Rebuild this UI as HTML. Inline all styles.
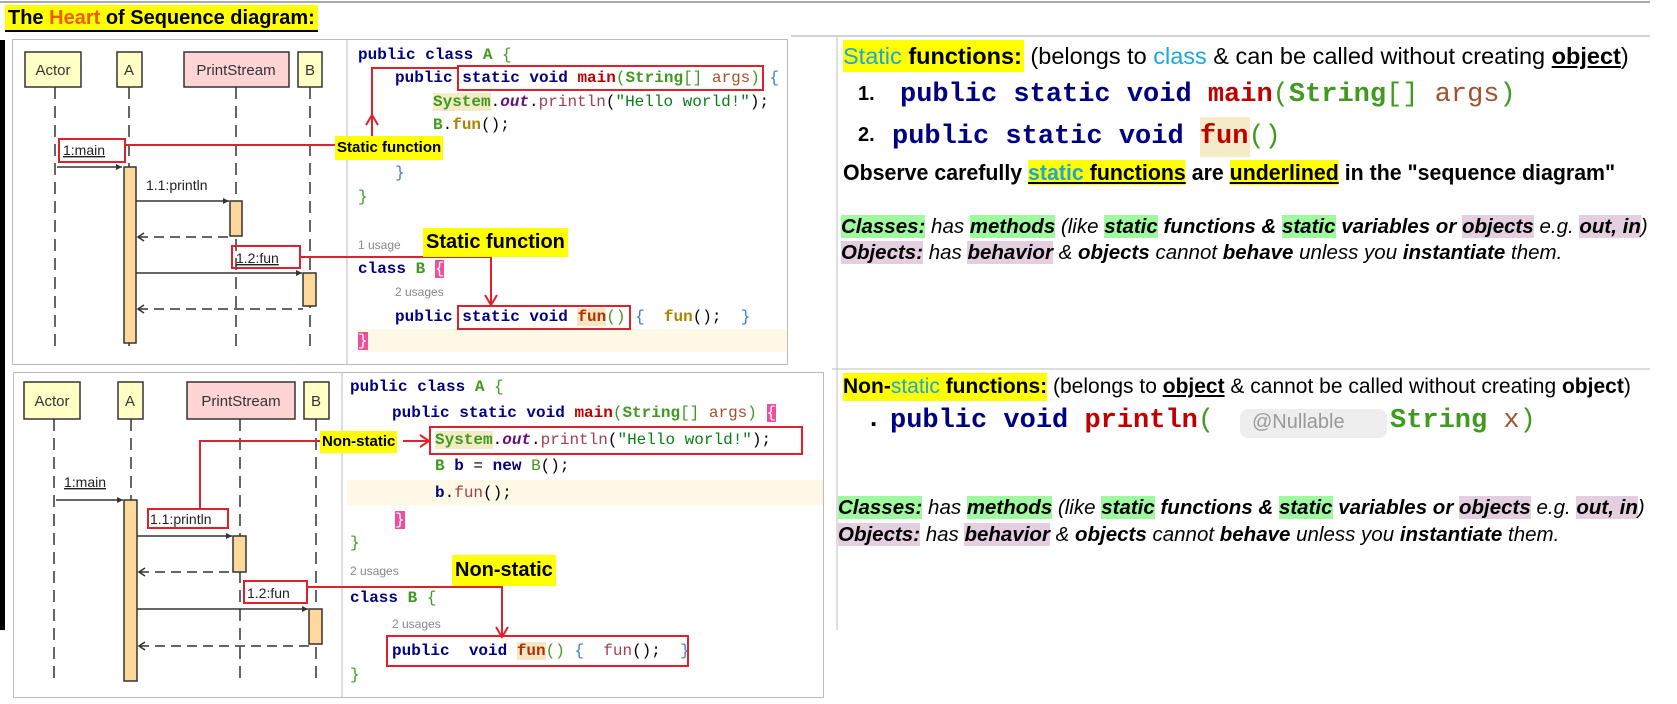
<!DOCTYPE html>
<html><head><meta charset="utf-8"><style>
*{margin:0;padding:0;box-sizing:border-box}
body{width:1677px;height:704px;background:#fff;position:relative;overflow:hidden;font-family:"Liberation Sans",sans-serif;color:#000}
.a{position:absolute;white-space:nowrap}
.c{font-family:"Liberation Mono",monospace;font-size:16px;line-height:20px;white-space:pre}
.k{color:#000080;font-weight:bold}
.g{color:#3f9a1f}
.gb{color:#3f9a1f;font-weight:bold}
.r{color:#c00000;font-weight:bold}
.br{color:#a0522d}
.s{color:#067d17}
.o{color:#660e7a;font-weight:bold;font-style:italic}
.y{background:#ffff00}
.gr{background:#9ffa9f}
.pk{background:#e3cfdf}
.u{font-size:12px;color:#888;font-family:"Liberation Sans",sans-serif}
.lab{background:#ffff00;font-weight:bold;font-family:"Liberation Sans",sans-serif}
.it{font-style:italic;font-size:20.5px}
.it b{font-weight:bold}
.nar{transform-origin:0 50%}
</style></head><body>
<svg class="a" style="left:0;top:0" width="1677" height="704">
<line x1="0" y1="2" x2="1650" y2="2" stroke="#aaa" stroke-width="2"/>
<line x1="791" y1="36" x2="1650" y2="36" stroke="#aaa"/>
<line x1="837" y1="36" x2="837" y2="630" stroke="#bbb"/>
<line x1="832" y1="369" x2="1650" y2="369" stroke="#bbb"/>
<rect x="0" y="40" width="5" height="590" fill="#000"/>
<rect x="12.5" y="39.5" width="775" height="325" fill="none" stroke="#bbb"/>
<line x1="347" y1="40" x2="347" y2="364" stroke="#bbb"/>
<rect x="13.5" y="372.5" width="810" height="325" fill="none" stroke="#bbb"/>
<line x1="342" y1="373" x2="342" y2="697" stroke="#bbb"/>
<rect x="358" y="329" width="429" height="23" fill="#fdf9e6"/>
<rect x="347" y="480" width="476" height="25" fill="#fdf9e6"/>
<g stroke="#333" stroke-width="1.5">
<rect x="25" y="52" width="56" height="35" fill="#ffffc6"/>
<rect x="117" y="52" width="25" height="35" fill="#ffffc6"/>
<rect x="184" y="52" width="105" height="35" fill="#ffd4d4"/>
<rect x="298" y="52" width="24" height="35" fill="#ffffc6"/>
<g stroke-dasharray="12,7"><line x1="55" y1="87" x2="55" y2="350"/><line x1="129" y1="87" x2="129" y2="350"/><line x1="236" y1="87" x2="236" y2="350"/><line x1="310" y1="87" x2="310" y2="350"/></g>
<rect x="124" y="167" width="12" height="176" fill="#ffd89b"/>
<rect x="230" y="201" width="12" height="35" fill="#ffd89b"/>
<rect x="303" y="273" width="13" height="33" fill="#ffd89b"/>
<line x1="57" y1="167" x2="122" y2="167"/><line x1="136" y1="201" x2="229" y2="201"/><line x1="136" y1="273" x2="302" y2="273"/>
<g stroke-dasharray="10,6"><line x1="138" y1="237" x2="230" y2="237"/><line x1="138" y1="309" x2="303" y2="309"/></g>
<rect x="24" y="382" width="56" height="37" fill="#ffffc6"/>
<rect x="118" y="382" width="25" height="37" fill="#ffffc6"/>
<rect x="187" y="382" width="108" height="37" fill="#ffd4d4"/>
<rect x="304" y="382" width="25" height="37" fill="#ffffc6"/>
<g stroke-dasharray="12,7"><line x1="54" y1="419" x2="54" y2="684"/><line x1="131" y1="419" x2="131" y2="684"/><line x1="240" y1="419" x2="240" y2="684"/><line x1="316" y1="419" x2="316" y2="684"/></g>
<rect x="124" y="500" width="13" height="181" fill="#ffd89b"/>
<rect x="233" y="536" width="13" height="36" fill="#ffd89b"/>
<rect x="309" y="609" width="13" height="35" fill="#ffd89b"/>
<line x1="56" y1="500" x2="123" y2="500"/><line x1="137" y1="536" x2="232" y2="536"/><line x1="137" y1="609" x2="308" y2="609"/>
<g stroke-dasharray="10,6"><line x1="139" y1="572" x2="233" y2="572"/><line x1="139" y1="646" x2="309" y2="646"/></g>
</g>
<g fill="#333"><path d="M122 167l-6-3v6z"/><path d="M229 201l-6-3v6z"/><path d="M302 273l-6-3v6z"/><path d="M123 500l-6-3v6z"/><path d="M232 536l-6-3v6z"/><path d="M308 609l-6-3v6z"/></g>
<g fill="none" stroke="#333" stroke-width="1.5"><path d="M144 233l-6 4 6 4"/><path d="M144 305l-6 4 6 4"/><path d="M145 568l-6 4 6 4"/><path d="M145 642l-6 4 6 4"/></g>
<g fill="none" stroke="#e0202a" stroke-width="2">
<rect x="59" y="139" width="66" height="23"/>
<line x1="125" y1="145" x2="336" y2="145"/>
<path d="M372 136V68H458"/><path d="M366 125l6-10 6 10"/>
<rect x="458" y="66" width="305" height="24"/>
<rect x="232" y="246" width="68" height="22"/>
<path d="M300 257H491V304"/><path d="M485 295l6 10 6-10"/>
<rect x="458" y="306" width="172" height="23"/>
<rect x="148" y="509" width="80" height="19"/>
<path d="M200 509V441H320"/><line x1="403" y1="441" x2="428" y2="441"/><path d="M420 435l9 6-9 6"/>
<rect x="430" y="427" width="372" height="27"/>
<rect x="244" y="581" width="63" height="22"/>
<path d="M307 587H502V636"/><path d="M496 627l6 10 6-10"/>
<rect x="387" y="636" width="301" height="30"/>
</g>
<g fill="#333" font-family="Liberation Sans" font-size="15" text-anchor="middle">
<text x="53" y="75">Actor</text><text x="129" y="75">A</text><text x="236" y="75">PrintStream</text><text x="310" y="75">B</text>
<text x="52" y="406">Actor</text><text x="130" y="406">A</text><text x="241" y="406">PrintStream</text><text x="316" y="406">B</text>
</g>
<g fill="#222" font-family="Liberation Sans" font-size="14">
<text x="63" y="155" text-decoration="underline">1:main</text>
<text x="146" y="190">1.1:println</text>
<text x="236" y="263" text-decoration="underline">1.2:fun</text>
<text x="64" y="487" text-decoration="underline">1:main</text>
<text x="150" y="524">1.1:println</text>
<text x="247" y="598">1.2:fun</text>
</g>
<rect x="1240" y="409" width="147" height="29" rx="8" fill="#eee"/>
<rect x="1200" y="117" width="50" height="40" fill="#f5ebc8"/>
</svg>

<div class="a lab" style="left:5px;top:5px;height:27px;font-size:20px;line-height:27px;padding:0 3px;border-bottom:2px solid #000">The <span style="color:#f05a00">Heart</span> of Sequence diagram:</div>

<div class="a lab" style="left:335px;top:136px;height:24px;font-size:15px;line-height:24px;padding:0 2px">Static function</div>
<div class="a lab" style="left:423px;top:228px;height:29px;font-size:20px;line-height:29px;padding:0 3px">Static function</div>
<div class="a lab" style="left:320px;top:431px;height:22px;font-size:15px;line-height:22px;padding:0 2px">Non-static</div>
<div class="a lab" style="left:452px;top:555px;height:31px;font-size:20px;line-height:31px;padding:0 3px">Non-static</div>

<div class="a c" style="left:358px;top:45px"><span class="k">public class</span> <span class="gb">A</span> <span class="g">{</span></div>
<div class="a c" style="left:395px;top:68px"><span class="k">public static void</span> <span class="r">main</span><span class="g">(</span><span class="gb">String</span><span class="g">[]</span> <span class="br">args</span><span class="g">)</span> <span style="color:#3a7dc0">{</span></div>
<div class="a c" style="left:433px;top:92px"><span class="gb" style="background:#f2ebc6">System</span>.<span class="o">out</span>.<span style="color:#a04050">println</span>(<span class="s">"Hello world!"</span>);</div>
<div class="a c" style="left:433px;top:115px"><span class="gb">B</span>.<span style="color:#b08000;font-weight:bold">fun</span>();</div>
<div class="a c" style="left:395px;top:163px;color:#3a7dc0">}</div>
<div class="a c" style="left:358px;top:187px;color:#3f9a1f">}</div>
<div class="a u" style="left:358px;top:238px">1 usage</div>
<div class="a c" style="left:358px;top:259px"><span class="k">class</span> <span class="gb">B</span> <span style="background:#f04e98;color:#fff">{</span></div>
<div class="a u" style="left:395px;top:285px">2 usages</div>
<div class="a c" style="left:395px;top:307px"><span class="k">public static void</span> <span class="r" style="background:#f7e6c4;color:#b03000">fun</span><span class="g">()</span> <span style="color:#3a7dc0">{</span>  <span style="color:#b08000;font-weight:bold">fun</span>();  <span style="color:#3a7dc0">}</span></div>
<div class="a c" style="left:358px;top:331px"><span style="background:#f04e98;color:#fff">}</span></div>

<div class="a c" style="left:350px;top:377px"><span class="k">public class</span> <span class="gb">A</span> <span class="g">{</span></div>
<div class="a c" style="left:392px;top:403px"><span class="k">public static void</span> <span class="r">main</span><span class="g">(</span><span class="gb">String</span><span class="g">[]</span> <span class="br">args</span><span class="g">)</span> <span style="background:#f04e98;color:#fff">{</span></div>
<div class="a c" style="left:435px;top:430px"><span class="gb" style="background:#f2ebc6">System</span>.<span class="o">out</span>.<span style="color:#a04050">println</span>(<span class="s">"Hello world!"</span>);</div>
<div class="a c" style="left:435px;top:456px"><span class="gb">B</span> <span class="k">b</span> = <span class="k">new</span> <span class="g">B</span>();</div>
<div class="a c" style="left:435px;top:483px"><span class="k">b</span>.<span style="color:#a04050">fun</span>();</div>
<div class="a c" style="left:395px;top:510px"><span style="background:#f04e98;color:#fff">}</span></div>
<div class="a c" style="left:350px;top:533px;color:#3f9a1f">}</div>
<div class="a u" style="left:350px;top:564px">2 usages</div>
<div class="a c" style="left:350px;top:588px"><span class="k">class</span> <span class="gb">B</span> <span class="g">{</span></div>
<div class="a u" style="left:392px;top:617px">2 usages</div>
<div class="a c" style="left:392px;top:641px"><span class="k">public  void</span> <span class="r" style="background:#f7e6c4;color:#b03000">fun</span><span class="g">()</span> <span style="color:#3a7dc0">{</span>  <span style="color:#a04050">fun</span>();  <span style="color:#3a7dc0">}</span></div>
<div class="a c" style="left:350px;top:665px;color:#3f9a1f">}</div>

<div class="a" style="left:843px;top:40px;height:32px;line-height:32px;font-size:23.5px"><span class="y" style="display:inline-block;padding-right:2px"><span style="color:#1aa7d8">Static</span> <b>functions:</b></span> (belongs to <span style="color:#1aa7d8">class</span> &amp; can be called without creating <b style="text-decoration:underline">object</b>)</div>
<div class="a" style="left:858px;top:83px;font-size:20px;font-weight:bold">1.</div>
<div class="a c" style="left:900px;top:78px;font-size:27px;line-height:34px"><span class="k">public static void</span> <span class="r">main</span><span class="g">(</span><span class="gb">String</span><span class="g">[]</span> <span class="br">args</span><span class="g">)</span></div>
<div class="a" style="left:858px;top:124px;font-size:20px;font-weight:bold">2.</div>
<div class="a c" style="left:892px;top:120px;font-size:27px;line-height:34px"><span class="k">public static void</span> <span class="r">fun</span><span class="g">()</span></div>
<div class="a nar" style="left:843px;top:159px;font-size:22px;font-weight:bold;line-height:28px;transform:scaleX(0.97)">Observe carefully <span class="y" style="text-decoration:underline"><span style="color:#1aa7d8">static</span> functions</span> are <span class="y" style="text-decoration:underline">underlined</span> in the "sequence diagram"</div>
<div class="a it" style="left:841px;top:215px;line-height:24px"><b class="gr">Classes:</b> has <b class="gr">methods</b> (like <b class="gr">static</b> <b>functions &amp;</b> <b class="gr">static</b> <b>variables or</b> <b class="pk">objects</b> e.g. <b class="pk">out, in</b>)</div>
<div class="a it" style="left:841px;top:241px;line-height:24px"><b class="pk">Objects:</b> has <b class="pk">behavior</b> &amp; <b>objects</b> cannot <b>behave</b> unless you <b>instantiate</b> them.</div>

<div class="a" style="left:843px;top:373px;height:28px;line-height:28px;font-size:21px"><span class="y" style="display:inline-block"><b>Non-</b><span style="color:#1aa7d8">static</span> <b>functions:</b></span> (belongs to <b style="text-decoration:underline">object</b> &amp; cannot be called without creating <b>object</b>)</div>
<div class="a" style="left:870px;top:402px;font-size:26px;font-weight:bold">.</div>
<div class="a c" style="left:890px;top:404px;font-size:27px;line-height:34px"><span class="k">public void</span> <span class="r">println</span><span class="g">(</span></div>
<div class="a" style="left:1252px;top:411px;font-size:20px;color:#999">@Nullable</div>
<div class="a c" style="left:1390px;top:404px;font-size:27px;line-height:34px"><span class="gb">String</span> <span class="br">x</span><span class="g">)</span></div>
<div class="a it" style="left:838px;top:496px;line-height:24px"><b class="gr">Classes:</b> has <b class="gr">methods</b> (like <b class="gr">static</b> <b>functions &amp;</b> <b class="gr">static</b> <b>variables or</b> <b class="pk">objects</b> e.g. <b class="pk">out, in</b>)</div>
<div class="a it" style="left:838px;top:523px;line-height:24px"><b class="pk">Objects:</b> has <b class="pk">behavior</b> &amp; <b>objects</b> cannot <b>behave</b> unless you <b>instantiate</b> them.</div>
</body></html>
